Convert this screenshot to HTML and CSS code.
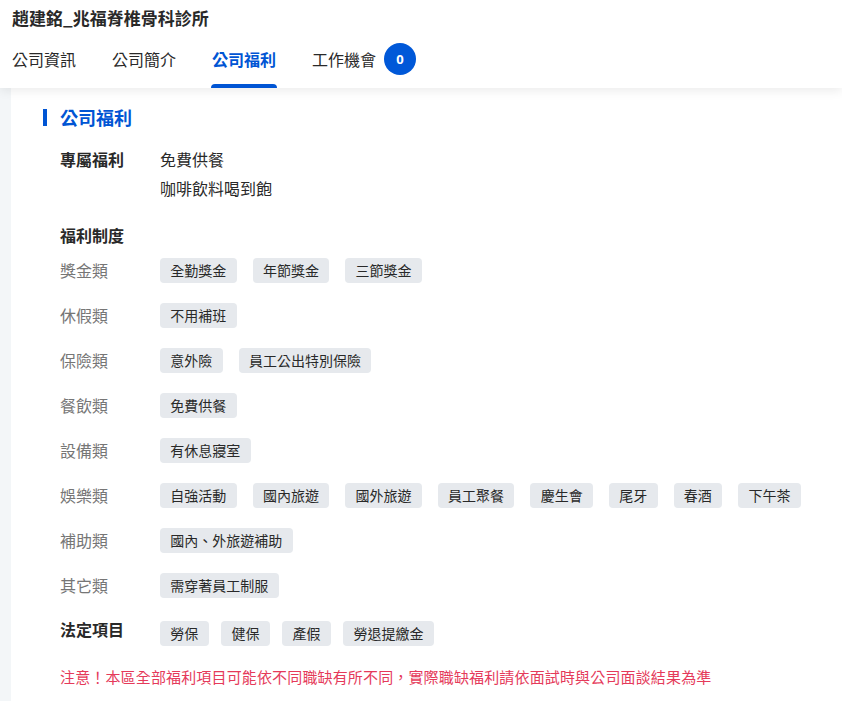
FILE: index.html
```html
<!DOCTYPE html>
<html lang="zh-Hant">
<head>
<meta charset="utf-8">
<title>趙建銘_兆福脊椎骨科診所</title>
<link rel="stylesheet" href="styles.css">
</head>
<body>
<header class="header">
  <div class="company">趙建銘_兆福脊椎骨科診所</div>
  <nav class="tabs">
    <div class="tab">公司資訊</div>
    <div class="tab">公司簡介</div>
    <div class="tab active">公司福利</div>
    <div class="tab">工作機會<span class="badge">0</span></div>
  </nav>
</header>
<main class="main">
  <section class="card">
    <h2 class="section-title">公司福利</h2>
    <div class="body">
      <div class="row special">
        <div class="label strong">專屬福利</div>
        <div class="values">
          <div>免費供餐</div>
          <div>咖啡飲料喝到飽</div>
        </div>
      </div>
      <div class="subhead">福利制度</div>
      <div class="cats">
        <div class="row cat"><div class="label">獎金類</div><div class="tags"><span class="tag">全勤獎金</span><span class="tag">年節獎金</span><span class="tag">三節獎金</span></div></div>
        <div class="row cat"><div class="label">休假類</div><div class="tags"><span class="tag">不用補班</span></div></div>
        <div class="row cat"><div class="label">保險類</div><div class="tags"><span class="tag">意外險</span><span class="tag">員工公出特別保險</span></div></div>
        <div class="row cat"><div class="label">餐飲類</div><div class="tags"><span class="tag">免費供餐</span></div></div>
        <div class="row cat"><div class="label">設備類</div><div class="tags"><span class="tag">有休息寢室</span></div></div>
        <div class="row cat"><div class="label">娛樂類</div><div class="tags"><span class="tag">自強活動</span><span class="tag">國內旅遊</span><span class="tag">國外旅遊</span><span class="tag">員工聚餐</span><span class="tag">慶生會</span><span class="tag">尾牙</span><span class="tag">春酒</span><span class="tag">下午茶</span></div></div>
        <div class="row cat"><div class="label">補助類</div><div class="tags"><span class="tag">國內、外旅遊補助</span></div></div>
        <div class="row cat"><div class="label">其它類</div><div class="tags"><span class="tag">需穿著員工制服</span></div></div>
      </div>
      <div class="row legal">
        <div class="label strong">法定項目</div>
        <div class="tags"><span class="tag">勞保</span><span class="tag">健保</span><span class="tag">產假</span><span class="tag">勞退提繳金</span></div>
      </div>
      <p class="note">注意！本區全部福利項目可能依不同職缺有所不同，實際職缺福利請依面試時與公司面談結果為準</p>
    </div>
  </section>
</main>
</body>
</html>
```
FILE: styles.css
```css
* { box-sizing: border-box; }
html, body { margin: 0; padding: 0; }
body {
  background: #f3f6f8;
  font-family: "Noto Sans CJK TC", "Noto Sans", sans-serif;
  color: #292929;
  height: 701px;
  overflow: hidden;
}
.header {
  background: #fff;
  position: relative;
  z-index: 2;
  box-shadow: 0 3px 10px rgba(0, 0, 0, 0.08);
}
.company {
  padding: 6px 12px 0;
  font-size: 17px;
  font-weight: 700;
  line-height: 24px;
  color: #292929;
}
.tabs {
  display: flex;
  gap: 36px;
  padding-left: 12px;
}
.tab {
  position: relative;
  display: flex;
  align-items: center;
  height: 58px;
  font-size: 16px;
  line-height: 24px;
  color: #292929;
}
.tab.active {
  color: #0055d4;
  font-weight: 700;
}
.tab.active::after {
  content: "";
  position: absolute;
  left: -1px;
  right: -1px;
  bottom: 0;
  height: 4px;
  border-radius: 4px 4px 0 0;
  background: #0055d4;
}
.badge {
  margin-left: 8px;
  width: 32px;
  height: 32px;
  border-radius: 50%;
  background: #0058d8;
  color: #fff;
  font-size: 13px;
  font-weight: 700;
  display: flex;
  align-items: center;
  justify-content: center;
  font-family: "Noto Sans", sans-serif;
}
.main {
  padding-left: 11px;
}
.card {
  background: #fff;
  padding: 17px 0 40px 32px;
  min-height: 613px;
}
.section-title {
  margin: 0;
  display: flex;
  align-items: center;
  gap: 13px;
  font-size: 18px;
  line-height: 24px;
  font-weight: 700;
  color: #0055d4;
}
.section-title::before {
  content: "";
  width: 4px;
  height: 17px;
  background: #0055d4;
}
.body {
  padding-left: 17px;
}
.row {
  display: flex;
}
.label {
  width: 100px;
  flex-shrink: 0;
  font-size: 16px;
}
.label.strong {
  font-weight: 700;
  color: #292929;
  line-height: 24px;
}
.special {
  margin-top: 16px;
}
.special .label { line-height: 29px; }
.values {
  font-size: 16px;
  line-height: 29px;
}
.subhead {
  margin-top: 20px;
  font-size: 16px;
  font-weight: 700;
  line-height: 24px;
}
.cats {
  margin-top: 11px;
  display: flex;
  flex-direction: column;
  gap: 20px;
}
.cat .label {
  color: #767676;
  line-height: 25px;
}
.tags {
  display: flex;
  flex-wrap: wrap;
  gap: 16px;
}
.tag {
  background: #e6e9ed;
  border-radius: 4px;
  padding: 2px 10.3px;
  font-size: 14px;
  line-height: 21px;
  color: #292929;
}
.legal {
  margin-top: 19px;
}
.legal .tags {
  margin-top: 4px;
  gap: 12.5px;
}
.note {
  margin: 19px 0 0;
  font-size: 15px;
  line-height: 24px;
  letter-spacing: 0.15px;
  color: #e53a5a;
}
```
